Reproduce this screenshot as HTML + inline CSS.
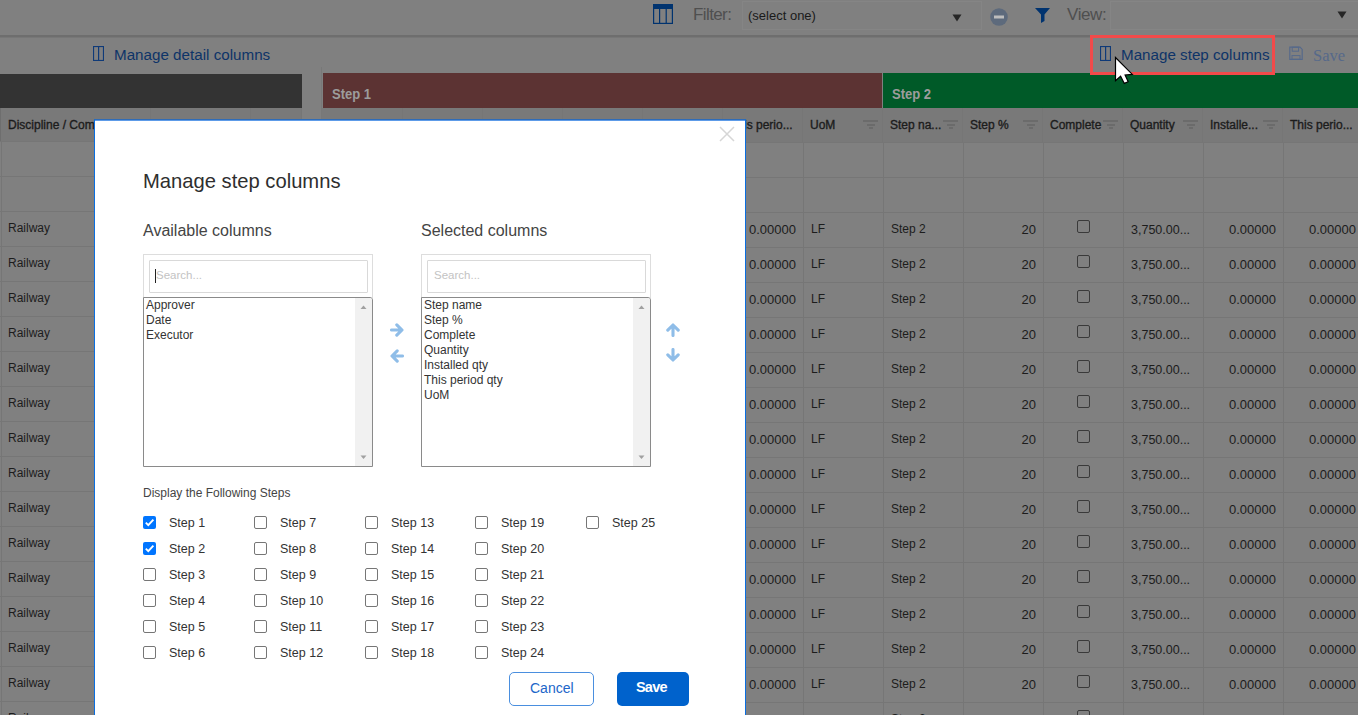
<!DOCTYPE html>
<html><head><meta charset="utf-8">
<style>
*{box-sizing:border-box;margin:0;padding:0}
html,body{width:1358px;height:715px;overflow:hidden;background:#808080;font-family:"Liberation Sans",sans-serif;color:#1c1c1c;position:relative}
div,span,svg{position:absolute}
.t{white-space:nowrap;line-height:1}
.hl{height:1px;background:#767676}
.vl{width:1px;background:#767676}
.ht{font-size:12px;-webkit-text-stroke:0.35px #1c1c1c;color:#1c1c1c}
.c12{font-size:12px}
.c13{font-size:13px}
.cb{width:13px;height:13px;border:1px solid #3a3a3a;border-radius:2px;background:#808080}
.fi{width:15px;height:10px}
.fi i{position:absolute;display:block;background:#6b6b6b;height:2px}
.m{color:#333}
input[type=checkbox]{position:absolute;margin:0;width:13px;height:13px}
.ck{width:13px;height:13px;border:1px solid #767676;border-radius:2px;background:#fff}
.ckd{width:13px;height:13px;border-radius:2px;background:#0075ff}
.sl{font-size:12.5px;color:#333}
.li{font-size:12px;color:#333;line-height:15px;position:static;display:block}
</style></head><body>

<div style="left:0;top:0;width:1358px;height:35px;background:#808080"></div>
<div style="left:0;top:35px;width:1358px;height:2px;background:#6e6e6e"></div>
<div style="left:0;top:37px;width:1358px;height:1px;background:#777"></div>
<svg style="left:653px;top:4px" width="20" height="20" viewBox="0 0 20 20"><rect x="0.6" y="0.6" width="18.8" height="18.8" fill="none" stroke="#00336f" stroke-width="1.2"/><rect x="0" y="0" width="20" height="5" fill="#00336f"/><rect x="6" y="4" width="1.2" height="15" fill="#00336f"/><rect x="12.6" y="4" width="1.2" height="15" fill="#00336f"/></svg>
<span class="t" style="left:693px;top:6px;font-size:17px;letter-spacing:-0.6px;color:#4f4f4f">Filter:</span>
<div style="left:742px;top:1px;width:240px;height:29px;border:1px solid #858585"></div>
<span class="t" style="left:748px;top:9px;font-size:13px;color:#1a1a1a">(select one)</span>
<svg style="left:952px;top:14px" width="10" height="8" viewBox="0 0 10 8"><path d="M0.5 0.5 L9.5 0.5 L5 7.5 Z" fill="#262626"/></svg>
<svg style="left:990px;top:8px" width="18" height="18" viewBox="0 0 18 18"><circle cx="9" cy="9" r="8.8" fill="#5d6a7c"/><rect x="4" y="7.5" width="10" height="3" fill="#bdbdbd"/></svg>
<svg style="left:1035px;top:8px" width="16" height="15" viewBox="0 0 16 15"><path d="M0 0 H15 L9.5 6.5 V13 L6 15 V6.5 Z" fill="#00336f"/></svg>
<span class="t" style="left:1067px;top:6px;font-size:17px;letter-spacing:-0.4px;color:#4f4f4f">View:</span>
<div style="left:1110px;top:1px;width:260px;height:29px;border:1px solid #858585"></div>
<svg style="left:1337px;top:11px" width="10" height="8" viewBox="0 0 10 8"><path d="M0.5 0.5 L9.5 0.5 L5 7.5 Z" fill="#262626"/></svg>
<svg style="left:93px;top:46px" width="11" height="15" viewBox="0 0 11 15"><rect x="0.5" y="0.5" width="10" height="14" fill="none" stroke="#0f3a78" stroke-width="1.2"/><rect x="5" y="0.5" width="1.2" height="14" fill="#0f3a78"/></svg>
<span class="t" style="left:114px;top:47px;font-size:15.2px;color:#0e3468">Manage detail columns</span>
<svg style="left:1100px;top:46px" width="11" height="15" viewBox="0 0 11 15"><rect x="0.5" y="0.5" width="10" height="14" fill="none" stroke="#0f3a78" stroke-width="1.2"/><rect x="5" y="0.5" width="1.2" height="14" fill="#0f3a78"/></svg>
<span class="t" style="left:1121px;top:47px;font-size:15.2px;color:#0e3468">Manage step columns</span>
<svg style="left:1289px;top:46px" width="14" height="14" viewBox="0 0 14 14"><path d="M0.8 1.2 H11 L13.2 3.4 V13.3 H0.8 Z" fill="none" stroke="#56698a" stroke-width="1.2"/><rect x="3.2" y="1.2" width="6.4" height="4" fill="none" stroke="#56698a" stroke-width="1"/><rect x="3" y="9.6" width="8" height="3.7" fill="none" stroke="#56698a" stroke-width="1"/></svg>
<span class="t" style="left:1313px;top:47.5px;font-size:16.5px;font-family:'Liberation Serif',serif;color:#56698a">Save</span>
<div style="left:0;top:74px;width:302px;height:34px;background:#333"></div>
<div style="left:321px;top:67px;width:1px;height:648px;background:#787878"></div>
<div style="left:323px;top:73px;width:559px;height:35px;background:#5c3333"><span class="t" style="left:9px;top:13px;font-size:15.5px;transform:scaleX(0.84);transform-origin:0 0;font-weight:bold;color:#9c9c9c">Step 1</span></div>
<div style="left:883px;top:73px;width:475px;height:35px;background:#005a28"><span class="t" style="left:9px;top:13px;font-size:15.5px;transform:scaleX(0.84);transform-origin:0 0;font-weight:bold;color:#9c9c9c">Step 2</span></div>
<div style="left:0;top:108px;width:302px;height:33px;background:#797979"></div>
<div style="left:322px;top:108px;width:1036px;height:34px;background:#797979"></div>
<div class="hl" style="left:0;top:141px;width:302px"></div>
<div class="hl" style="left:0;top:176px;width:302px"></div>
<div class="hl" style="left:0;top:211px;width:302px"></div>
<div class="hl" style="left:0;top:246px;width:302px"></div>
<div class="hl" style="left:0;top:281px;width:302px"></div>
<div class="hl" style="left:0;top:316px;width:302px"></div>
<div class="hl" style="left:0;top:351px;width:302px"></div>
<div class="hl" style="left:0;top:386px;width:302px"></div>
<div class="hl" style="left:0;top:421px;width:302px"></div>
<div class="hl" style="left:0;top:456px;width:302px"></div>
<div class="hl" style="left:0;top:491px;width:302px"></div>
<div class="hl" style="left:0;top:526px;width:302px"></div>
<div class="hl" style="left:0;top:561px;width:302px"></div>
<div class="hl" style="left:0;top:596px;width:302px"></div>
<div class="hl" style="left:0;top:631px;width:302px"></div>
<div class="hl" style="left:0;top:666px;width:302px"></div>
<div class="hl" style="left:0;top:701px;width:302px"></div>
<div class="hl" style="left:322px;top:142px;width:1036px"></div>
<div class="hl" style="left:322px;top:177px;width:1036px"></div>
<div class="hl" style="left:322px;top:212px;width:1036px"></div>
<div class="hl" style="left:322px;top:247px;width:1036px"></div>
<div class="hl" style="left:322px;top:282px;width:1036px"></div>
<div class="hl" style="left:322px;top:317px;width:1036px"></div>
<div class="hl" style="left:322px;top:352px;width:1036px"></div>
<div class="hl" style="left:322px;top:387px;width:1036px"></div>
<div class="hl" style="left:322px;top:422px;width:1036px"></div>
<div class="hl" style="left:322px;top:457px;width:1036px"></div>
<div class="hl" style="left:322px;top:492px;width:1036px"></div>
<div class="hl" style="left:322px;top:527px;width:1036px"></div>
<div class="hl" style="left:322px;top:562px;width:1036px"></div>
<div class="hl" style="left:322px;top:597px;width:1036px"></div>
<div class="hl" style="left:322px;top:632px;width:1036px"></div>
<div class="hl" style="left:322px;top:667px;width:1036px"></div>
<div class="hl" style="left:322px;top:702px;width:1036px"></div>
<div class="vl" style="left:0px;top:108px;height:33px;background:#6e6e6e"></div>
<div class="vl" style="left:1px;top:141px;height:574px"></div>
<div class="vl" style="left:150px;top:108px;height:34px"></div>
<div class="vl" style="left:151px;top:142px;height:573px"></div>
<div class="vl" style="left:250px;top:108px;height:34px"></div>
<div class="vl" style="left:251px;top:142px;height:573px"></div>
<div class="vl" style="left:301px;top:108px;height:34px"></div>
<div class="vl" style="left:301px;top:142px;height:573px"></div>
<div class="vl" style="left:402px;top:108px;height:34px"></div>
<div class="vl" style="left:403px;top:142px;height:573px"></div>
<div class="vl" style="left:482px;top:108px;height:34px"></div>
<div class="vl" style="left:483px;top:142px;height:573px"></div>
<div class="vl" style="left:562px;top:108px;height:34px"></div>
<div class="vl" style="left:563px;top:142px;height:573px"></div>
<div class="vl" style="left:642px;top:108px;height:34px"></div>
<div class="vl" style="left:643px;top:142px;height:573px"></div>
<div class="vl" style="left:722px;top:108px;height:34px"></div>
<div class="vl" style="left:723px;top:142px;height:573px"></div>
<div class="vl" style="left:802px;top:108px;height:34px"></div>
<div class="vl" style="left:803px;top:142px;height:573px"></div>
<div class="vl" style="left:882px;top:108px;height:34px"></div>
<div class="vl" style="left:883px;top:142px;height:573px"></div>
<div class="vl" style="left:962px;top:108px;height:34px"></div>
<div class="vl" style="left:963px;top:142px;height:573px"></div>
<div class="vl" style="left:1042px;top:108px;height:34px"></div>
<div class="vl" style="left:1043px;top:142px;height:573px"></div>
<div class="vl" style="left:1122px;top:108px;height:34px"></div>
<div class="vl" style="left:1123px;top:142px;height:573px"></div>
<div class="vl" style="left:1202px;top:108px;height:34px"></div>
<div class="vl" style="left:1203px;top:142px;height:573px"></div>
<div class="vl" style="left:1282px;top:108px;height:34px"></div>
<div class="vl" style="left:1283px;top:142px;height:573px"></div>
<span class="t ht" style="left:8px;top:119px">Discipline / Component</span>
<span class="t ht" style="left:158px;top:120px">Global name</span>
<span class="t ht" style="left:258px;top:120px">WBS</span>
<span class="t ht" style="left:730px;top:119px">This perio...</span>
<span class="t ht" style="left:810px;top:119px">UoM</span>
<div class="fi" style="left:863px;top:120px"><i style="left:0;top:0;width:15px"></i><i style="left:3.5px;top:3.7px;width:8px"></i><i style="left:5.5px;top:7.3px;width:4px"></i></div>
<span class="t ht" style="left:890px;top:119px">Step na...</span>
<div class="fi" style="left:943px;top:120px"><i style="left:0;top:0;width:15px"></i><i style="left:3.5px;top:3.7px;width:8px"></i><i style="left:5.5px;top:7.3px;width:4px"></i></div>
<span class="t ht" style="left:970px;top:119px">Step %</span>
<div class="fi" style="left:1023px;top:120px"><i style="left:0;top:0;width:15px"></i><i style="left:3.5px;top:3.7px;width:8px"></i><i style="left:5.5px;top:7.3px;width:4px"></i></div>
<span class="t ht" style="left:1050px;top:119px">Complete</span>
<div class="fi" style="left:1103px;top:120px"><i style="left:0;top:0;width:15px"></i><i style="left:3.5px;top:3.7px;width:8px"></i><i style="left:5.5px;top:7.3px;width:4px"></i></div>
<span class="t ht" style="left:1130px;top:119px">Quantity</span>
<div class="fi" style="left:1183px;top:120px"><i style="left:0;top:0;width:15px"></i><i style="left:3.5px;top:3.7px;width:8px"></i><i style="left:5.5px;top:7.3px;width:4px"></i></div>
<span class="t ht" style="left:1210px;top:119px">Installe...</span>
<div class="fi" style="left:1263px;top:120px"><i style="left:0;top:0;width:15px"></i><i style="left:3.5px;top:3.7px;width:8px"></i><i style="left:5.5px;top:7.3px;width:4px"></i></div>
<span class="t ht" style="left:1290px;top:119px">This perio...</span>
<span class="t c12" style="left:8px;top:222px">Railway</span>
<span class="t c13" style="left:749px;top:222.6px;width:47px;text-align:right">0.00000</span>
<span class="t c12" style="left:811px;top:223px">LF</span>
<span class="t c12" style="left:891px;top:223px">Step 2</span>
<span class="t c13" style="left:1000px;top:222.6px;width:36px;text-align:right">20</span>
<div class="cb" style="left:1077px;top:220px"></div>
<span class="t" style="left:1131px;top:224px;font-size:12.5px">3,750.00...</span>
<span class="t c13" style="left:1200px;top:222.6px;width:76px;text-align:right">0.00000</span>
<span class="t c13" style="left:1290px;top:222.6px;width:66px;text-align:right">0.00000</span>
<span class="t c12" style="left:8px;top:257px">Railway</span>
<span class="t c13" style="left:749px;top:257.6px;width:47px;text-align:right">0.00000</span>
<span class="t c12" style="left:811px;top:258px">LF</span>
<span class="t c12" style="left:891px;top:258px">Step 2</span>
<span class="t c13" style="left:1000px;top:257.6px;width:36px;text-align:right">20</span>
<div class="cb" style="left:1077px;top:255px"></div>
<span class="t" style="left:1131px;top:259px;font-size:12.5px">3,750.00...</span>
<span class="t c13" style="left:1200px;top:257.6px;width:76px;text-align:right">0.00000</span>
<span class="t c13" style="left:1290px;top:257.6px;width:66px;text-align:right">0.00000</span>
<span class="t c12" style="left:8px;top:292px">Railway</span>
<span class="t c13" style="left:749px;top:292.6px;width:47px;text-align:right">0.00000</span>
<span class="t c12" style="left:811px;top:293px">LF</span>
<span class="t c12" style="left:891px;top:293px">Step 2</span>
<span class="t c13" style="left:1000px;top:292.6px;width:36px;text-align:right">20</span>
<div class="cb" style="left:1077px;top:290px"></div>
<span class="t" style="left:1131px;top:294px;font-size:12.5px">3,750.00...</span>
<span class="t c13" style="left:1200px;top:292.6px;width:76px;text-align:right">0.00000</span>
<span class="t c13" style="left:1290px;top:292.6px;width:66px;text-align:right">0.00000</span>
<span class="t c12" style="left:8px;top:327px">Railway</span>
<span class="t c13" style="left:749px;top:327.6px;width:47px;text-align:right">0.00000</span>
<span class="t c12" style="left:811px;top:328px">LF</span>
<span class="t c12" style="left:891px;top:328px">Step 2</span>
<span class="t c13" style="left:1000px;top:327.6px;width:36px;text-align:right">20</span>
<div class="cb" style="left:1077px;top:325px"></div>
<span class="t" style="left:1131px;top:329px;font-size:12.5px">3,750.00...</span>
<span class="t c13" style="left:1200px;top:327.6px;width:76px;text-align:right">0.00000</span>
<span class="t c13" style="left:1290px;top:327.6px;width:66px;text-align:right">0.00000</span>
<span class="t c12" style="left:8px;top:362px">Railway</span>
<span class="t c13" style="left:749px;top:362.6px;width:47px;text-align:right">0.00000</span>
<span class="t c12" style="left:811px;top:363px">LF</span>
<span class="t c12" style="left:891px;top:363px">Step 2</span>
<span class="t c13" style="left:1000px;top:362.6px;width:36px;text-align:right">20</span>
<div class="cb" style="left:1077px;top:360px"></div>
<span class="t" style="left:1131px;top:364px;font-size:12.5px">3,750.00...</span>
<span class="t c13" style="left:1200px;top:362.6px;width:76px;text-align:right">0.00000</span>
<span class="t c13" style="left:1290px;top:362.6px;width:66px;text-align:right">0.00000</span>
<span class="t c12" style="left:8px;top:397px">Railway</span>
<span class="t c13" style="left:749px;top:397.6px;width:47px;text-align:right">0.00000</span>
<span class="t c12" style="left:811px;top:398px">LF</span>
<span class="t c12" style="left:891px;top:398px">Step 2</span>
<span class="t c13" style="left:1000px;top:397.6px;width:36px;text-align:right">20</span>
<div class="cb" style="left:1077px;top:395px"></div>
<span class="t" style="left:1131px;top:399px;font-size:12.5px">3,750.00...</span>
<span class="t c13" style="left:1200px;top:397.6px;width:76px;text-align:right">0.00000</span>
<span class="t c13" style="left:1290px;top:397.6px;width:66px;text-align:right">0.00000</span>
<span class="t c12" style="left:8px;top:432px">Railway</span>
<span class="t c13" style="left:749px;top:432.6px;width:47px;text-align:right">0.00000</span>
<span class="t c12" style="left:811px;top:433px">LF</span>
<span class="t c12" style="left:891px;top:433px">Step 2</span>
<span class="t c13" style="left:1000px;top:432.6px;width:36px;text-align:right">20</span>
<div class="cb" style="left:1077px;top:430px"></div>
<span class="t" style="left:1131px;top:434px;font-size:12.5px">3,750.00...</span>
<span class="t c13" style="left:1200px;top:432.6px;width:76px;text-align:right">0.00000</span>
<span class="t c13" style="left:1290px;top:432.6px;width:66px;text-align:right">0.00000</span>
<span class="t c12" style="left:8px;top:467px">Railway</span>
<span class="t c13" style="left:749px;top:467.6px;width:47px;text-align:right">0.00000</span>
<span class="t c12" style="left:811px;top:468px">LF</span>
<span class="t c12" style="left:891px;top:468px">Step 2</span>
<span class="t c13" style="left:1000px;top:467.6px;width:36px;text-align:right">20</span>
<div class="cb" style="left:1077px;top:465px"></div>
<span class="t" style="left:1131px;top:469px;font-size:12.5px">3,750.00...</span>
<span class="t c13" style="left:1200px;top:467.6px;width:76px;text-align:right">0.00000</span>
<span class="t c13" style="left:1290px;top:467.6px;width:66px;text-align:right">0.00000</span>
<span class="t c12" style="left:8px;top:502px">Railway</span>
<span class="t c13" style="left:749px;top:502.6px;width:47px;text-align:right">0.00000</span>
<span class="t c12" style="left:811px;top:503px">LF</span>
<span class="t c12" style="left:891px;top:503px">Step 2</span>
<span class="t c13" style="left:1000px;top:502.6px;width:36px;text-align:right">20</span>
<div class="cb" style="left:1077px;top:500px"></div>
<span class="t" style="left:1131px;top:504px;font-size:12.5px">3,750.00...</span>
<span class="t c13" style="left:1200px;top:502.6px;width:76px;text-align:right">0.00000</span>
<span class="t c13" style="left:1290px;top:502.6px;width:66px;text-align:right">0.00000</span>
<span class="t c12" style="left:8px;top:537px">Railway</span>
<span class="t c13" style="left:749px;top:537.6px;width:47px;text-align:right">0.00000</span>
<span class="t c12" style="left:811px;top:538px">LF</span>
<span class="t c12" style="left:891px;top:538px">Step 2</span>
<span class="t c13" style="left:1000px;top:537.6px;width:36px;text-align:right">20</span>
<div class="cb" style="left:1077px;top:535px"></div>
<span class="t" style="left:1131px;top:539px;font-size:12.5px">3,750.00...</span>
<span class="t c13" style="left:1200px;top:537.6px;width:76px;text-align:right">0.00000</span>
<span class="t c13" style="left:1290px;top:537.6px;width:66px;text-align:right">0.00000</span>
<span class="t c12" style="left:8px;top:572px">Railway</span>
<span class="t c13" style="left:749px;top:572.6px;width:47px;text-align:right">0.00000</span>
<span class="t c12" style="left:811px;top:573px">LF</span>
<span class="t c12" style="left:891px;top:573px">Step 2</span>
<span class="t c13" style="left:1000px;top:572.6px;width:36px;text-align:right">20</span>
<div class="cb" style="left:1077px;top:570px"></div>
<span class="t" style="left:1131px;top:574px;font-size:12.5px">3,750.00...</span>
<span class="t c13" style="left:1200px;top:572.6px;width:76px;text-align:right">0.00000</span>
<span class="t c13" style="left:1290px;top:572.6px;width:66px;text-align:right">0.00000</span>
<span class="t c12" style="left:8px;top:607px">Railway</span>
<span class="t c13" style="left:749px;top:607.6px;width:47px;text-align:right">0.00000</span>
<span class="t c12" style="left:811px;top:608px">LF</span>
<span class="t c12" style="left:891px;top:608px">Step 2</span>
<span class="t c13" style="left:1000px;top:607.6px;width:36px;text-align:right">20</span>
<div class="cb" style="left:1077px;top:605px"></div>
<span class="t" style="left:1131px;top:609px;font-size:12.5px">3,750.00...</span>
<span class="t c13" style="left:1200px;top:607.6px;width:76px;text-align:right">0.00000</span>
<span class="t c13" style="left:1290px;top:607.6px;width:66px;text-align:right">0.00000</span>
<span class="t c12" style="left:8px;top:642px">Railway</span>
<span class="t c13" style="left:749px;top:642.6px;width:47px;text-align:right">0.00000</span>
<span class="t c12" style="left:811px;top:643px">LF</span>
<span class="t c12" style="left:891px;top:643px">Step 2</span>
<span class="t c13" style="left:1000px;top:642.6px;width:36px;text-align:right">20</span>
<div class="cb" style="left:1077px;top:640px"></div>
<span class="t" style="left:1131px;top:644px;font-size:12.5px">3,750.00...</span>
<span class="t c13" style="left:1200px;top:642.6px;width:76px;text-align:right">0.00000</span>
<span class="t c13" style="left:1290px;top:642.6px;width:66px;text-align:right">0.00000</span>
<span class="t c12" style="left:8px;top:677px">Railway</span>
<span class="t c13" style="left:749px;top:677.6px;width:47px;text-align:right">0.00000</span>
<span class="t c12" style="left:811px;top:678px">LF</span>
<span class="t c12" style="left:891px;top:678px">Step 2</span>
<span class="t c13" style="left:1000px;top:677.6px;width:36px;text-align:right">20</span>
<div class="cb" style="left:1077px;top:675px"></div>
<span class="t" style="left:1131px;top:679px;font-size:12.5px">3,750.00...</span>
<span class="t c13" style="left:1200px;top:677.6px;width:76px;text-align:right">0.00000</span>
<span class="t c13" style="left:1290px;top:677.6px;width:66px;text-align:right">0.00000</span>
<span class="t c12" style="left:8px;top:712px">Railway</span>
<span class="t c12" style="left:891px;top:713px">Step 2</span>
<span class="t c13" style="left:1000px;top:713px;width:36px;text-align:right">20</span>
<div class="cb" style="left:1077px;top:710px"></div>
<div style="left:94px;top:119px;width:652px;height:600px;background:#fff;border-left:1px solid #0a6ee0;border-right:1px solid #0a6ee0;border-top:1px solid #2f6cb8;box-shadow:inset 0 1px 0 #5d9be8">
</div>
<svg style="left:719px;top:126px" width="16" height="16" viewBox="0 0 16 16"><path d="M1 1 L15 15 M15 1 L1 15" stroke="#d6d6d6" stroke-width="1.5"/></svg>
<span class="t m" style="left:143px;top:171px;font-size:20.2px;color:#2e2e2e">Manage step columns</span>
<span class="t" style="left:143px;top:223px;font-size:16px;color:#444">Available columns</span>
<span class="t" style="left:421px;top:223px;font-size:16px;color:#444">Selected columns</span>
<div style="left:143px;top:254px;width:230px;height:44px;border:1px solid #ddd;border-bottom:none"></div><div style="left:149px;top:260px;width:219px;height:33px;border:1px solid #d9d9d9;border-radius:1px"></div><span class="t" style="left:156px;top:270px;font-size:11.5px;color:#c3c3c3">Search...</span><div style="left:155px;top:269px;width:1px;height:14px;background:#222"></div><div style="left:143px;top:297px;width:230px;height:170px;border:1px solid #8a8a8a;border-radius:0 3px 0 0;background:#fff;overflow:hidden"><div style="left:2px;top:0px;position:absolute"><span class="li t">Approver</span><span class="li t">Date</span><span class="li t">Executor</span></div><div style="left:211px;top:0;width:17px;height:168px;background:#f1f1f1"></div><svg style="left:216px;top:7px" width="7" height="5" viewBox="0 0 7 5"><path d="M0.5 4 L3.5 0.5 L6.5 4 Z" fill="#a0a0a0"/></svg><svg style="left:216px;top:157px" width="7" height="5" viewBox="0 0 7 5"><path d="M0.5 0.5 L3.5 4 L6.5 0.5 Z" fill="#a0a0a0"/></svg></div>
<div style="left:421px;top:254px;width:230px;height:44px;border:1px solid #ddd;border-bottom:none"></div><div style="left:427px;top:260px;width:219px;height:33px;border:1px solid #d9d9d9;border-radius:1px"></div><span class="t" style="left:434px;top:270px;font-size:11.5px;color:#c3c3c3">Search...</span><div style="left:421px;top:297px;width:230px;height:170px;border:1px solid #8a8a8a;border-radius:0 3px 0 0;background:#fff;overflow:hidden"><div style="left:2px;top:0px;position:absolute"><span class="li t">Step name</span><span class="li t">Step %</span><span class="li t">Complete</span><span class="li t">Quantity</span><span class="li t">Installed qty</span><span class="li t">This period qty</span><span class="li t">UoM</span></div><div style="left:211px;top:0;width:17px;height:168px;background:#f1f1f1"></div><svg style="left:216px;top:7px" width="7" height="5" viewBox="0 0 7 5"><path d="M0.5 4 L3.5 0.5 L6.5 4 Z" fill="#a0a0a0"/></svg><svg style="left:216px;top:157px" width="7" height="5" viewBox="0 0 7 5"><path d="M0.5 0.5 L3.5 4 L6.5 0.5 Z" fill="#a0a0a0"/></svg></div>
<svg style="left:390px;top:323px" width="14" height="14" viewBox="0 0 14 14"><g transform="rotate(0 7 7)"><path d="M1.5 7 H11.5 M6.8 1.8 L12 7 L6.8 12.2" fill="none" stroke="#8fbde8" stroke-width="3.1" stroke-linecap="round" stroke-linejoin="round"/></g></svg>
<svg style="left:390px;top:349px" width="14" height="14" viewBox="0 0 14 14"><g transform="rotate(180 7 7)"><path d="M1.5 7 H11.5 M6.8 1.8 L12 7 L6.8 12.2" fill="none" stroke="#8fbde8" stroke-width="3.1" stroke-linecap="round" stroke-linejoin="round"/></g></svg>
<svg style="left:666px;top:323px" width="14" height="14" viewBox="0 0 14 14"><g transform="rotate(-90 7 7)"><path d="M1.5 7 H11.5 M6.8 1.8 L12 7 L6.8 12.2" fill="none" stroke="#8fbde8" stroke-width="3.1" stroke-linecap="round" stroke-linejoin="round"/></g></svg>
<svg style="left:666px;top:348px" width="14" height="14" viewBox="0 0 14 14"><g transform="rotate(90 7 7)"><path d="M1.5 7 H11.5 M6.8 1.8 L12 7 L6.8 12.2" fill="none" stroke="#8fbde8" stroke-width="3.1" stroke-linecap="round" stroke-linejoin="round"/></g></svg>
<span class="t" style="left:143px;top:487px;font-size:12px;color:#444">Display the Following Steps</span>
<div class="ckd" style="left:143px;top:516px"><svg width="13" height="13" viewBox="0 0 13 13" style="left:0;top:0"><path d="M2.8 6.6 L5.3 9.1 L10.4 3.6" fill="none" stroke="#fff" stroke-width="1.9"/></svg></div>
<span class="t sl" style="left:169px;top:517px">Step 1</span>
<div class="ckd" style="left:143px;top:542px"><svg width="13" height="13" viewBox="0 0 13 13" style="left:0;top:0"><path d="M2.8 6.6 L5.3 9.1 L10.4 3.6" fill="none" stroke="#fff" stroke-width="1.9"/></svg></div>
<span class="t sl" style="left:169px;top:543px">Step 2</span>
<div class="ck" style="left:143px;top:568px"></div>
<span class="t sl" style="left:169px;top:569px">Step 3</span>
<div class="ck" style="left:143px;top:594px"></div>
<span class="t sl" style="left:169px;top:595px">Step 4</span>
<div class="ck" style="left:143px;top:620px"></div>
<span class="t sl" style="left:169px;top:621px">Step 5</span>
<div class="ck" style="left:143px;top:646px"></div>
<span class="t sl" style="left:169px;top:647px">Step 6</span>
<div class="ck" style="left:254px;top:516px"></div>
<span class="t sl" style="left:280px;top:517px">Step 7</span>
<div class="ck" style="left:254px;top:542px"></div>
<span class="t sl" style="left:280px;top:543px">Step 8</span>
<div class="ck" style="left:254px;top:568px"></div>
<span class="t sl" style="left:280px;top:569px">Step 9</span>
<div class="ck" style="left:254px;top:594px"></div>
<span class="t sl" style="left:280px;top:595px">Step 10</span>
<div class="ck" style="left:254px;top:620px"></div>
<span class="t sl" style="left:280px;top:621px">Step 11</span>
<div class="ck" style="left:254px;top:646px"></div>
<span class="t sl" style="left:280px;top:647px">Step 12</span>
<div class="ck" style="left:365px;top:516px"></div>
<span class="t sl" style="left:391px;top:517px">Step 13</span>
<div class="ck" style="left:365px;top:542px"></div>
<span class="t sl" style="left:391px;top:543px">Step 14</span>
<div class="ck" style="left:365px;top:568px"></div>
<span class="t sl" style="left:391px;top:569px">Step 15</span>
<div class="ck" style="left:365px;top:594px"></div>
<span class="t sl" style="left:391px;top:595px">Step 16</span>
<div class="ck" style="left:365px;top:620px"></div>
<span class="t sl" style="left:391px;top:621px">Step 17</span>
<div class="ck" style="left:365px;top:646px"></div>
<span class="t sl" style="left:391px;top:647px">Step 18</span>
<div class="ck" style="left:475px;top:516px"></div>
<span class="t sl" style="left:501px;top:517px">Step 19</span>
<div class="ck" style="left:475px;top:542px"></div>
<span class="t sl" style="left:501px;top:543px">Step 20</span>
<div class="ck" style="left:475px;top:568px"></div>
<span class="t sl" style="left:501px;top:569px">Step 21</span>
<div class="ck" style="left:475px;top:594px"></div>
<span class="t sl" style="left:501px;top:595px">Step 22</span>
<div class="ck" style="left:475px;top:620px"></div>
<span class="t sl" style="left:501px;top:621px">Step 23</span>
<div class="ck" style="left:475px;top:646px"></div>
<span class="t sl" style="left:501px;top:647px">Step 24</span>
<div class="ck" style="left:586px;top:516px"></div>
<span class="t sl" style="left:612px;top:517px">Step 25</span>
<div style="left:509px;top:672px;width:85px;height:34px;border:1px solid #4a8fdf;border-radius:5px;background:#fff"><span class="t" style="left:20px;top:8px;font-size:14px;color:#2166c9">Cancel</span></div>
<div style="left:617px;top:672px;width:72px;height:34px;border-radius:5px;background:#0062cc"><span class="t" style="left:19px;top:8px;font-size:14.5px;letter-spacing:-0.8px;font-weight:bold;color:#fff">Save</span></div>
<div style="left:1090px;top:35px;width:185px;height:40px;border:3px solid #f24a4a"></div>
<svg style="left:1114px;top:56px" width="22" height="30" viewBox="0 0 22 30"><path d="M1.5 1.5 L1.5 24.6 L6.6 20.2 L10.3 27.4 L14.2 25.7 L11.1 19 L18.3 18.4 Z" fill="#fff" stroke="#000" stroke-width="1.2" stroke-linejoin="miter"/></svg>
</body></html>
